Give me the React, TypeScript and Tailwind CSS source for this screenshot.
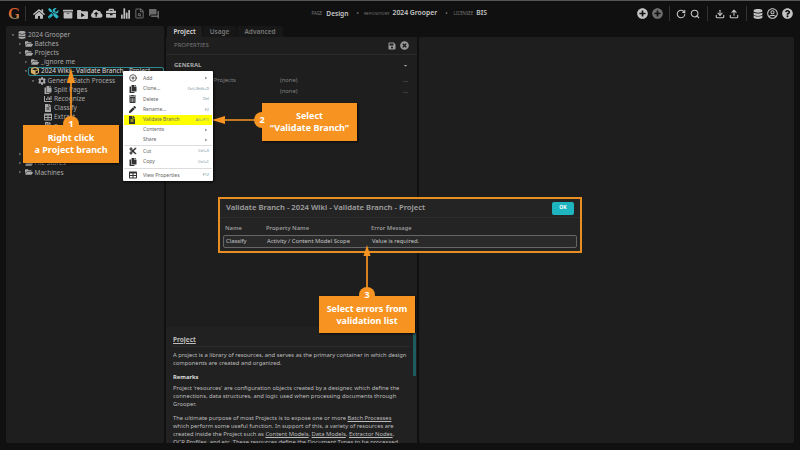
import type { ReactNode } from "react";
import {
  FaHome, FaTools, FaArchive, FaCloudUploadAlt, FaBriefcase, FaFolderOpen,
  FaDatabase, FaCube, FaCog, FaFileAlt, FaSave, FaTimesCircle, FaPlusCircle, FaRegUserCircle, FaQuestionCircle,
  FaTrashAlt, FaPen, FaCut, FaCopy, FaFileInvoice, FaTable, FaChartBar,
} from "react-icons/fa";
import { IoStatsChart } from "react-icons/io5";
import { MdQuestionAnswer } from "react-icons/md";
import { TbCaretRightFilled, TbCaretDownFilled } from "react-icons/tb";
import { CirclePlus, Download, FileSearch, RotateCw, Search, Upload } from "lucide-react";

type TreeRow = { label: string; depth: number; open?: boolean; leaf?: boolean; icon: ReactNode; selected?: boolean };

const ic = "w-[8px] h-[8px] text-[#a8a8a8]";
const tree: TreeRow[] = [
  { label: "2024 Grooper", depth: 0, open: true, icon: <FaDatabase className={ic} /> },
  { label: "Batches", depth: 1, icon: <FaFolderOpen className={ic} /> },
  { label: "Projects", depth: 1, open: true, icon: <FaFolderOpen className={ic} /> },
  { label: "_ignore me", depth: 2, icon: <FaFolderOpen className={ic} /> },
  { label: "2024 Wiki - Validate Branch - Project", depth: 2, open: true, selected: true, icon: <FaCube className="w-[8px] h-[8px] text-[#d8b36a]" /> },
  { label: "Generic Batch Process", depth: 3, open: true, icon: <FaCog className={ic} /> },
  { label: "Split Pages", depth: 4, leaf: true, icon: <FaCopy className={ic} /> },
  { label: "Recognize", depth: 4, leaf: true, icon: <FaChartBar className={ic} /> },
  { label: "Classify", depth: 4, leaf: true, icon: <FaFileAlt className={ic} /> },
  { label: "Extract", depth: 4, leaf: true, icon: <FaTable className={ic} /> },
  { label: "Review", depth: 4, leaf: true, icon: <FaFileInvoice className={ic} /> },
  { label: "Export", depth: 4, leaf: true, icon: <FaFileAlt className={ic} /> },
  { label: "Dispose", depth: 4, leaf: true, icon: <FaFileAlt className={ic} /> },
  { label: "Data Sources", depth: 1, icon: <FaFolderOpen className={ic} /> },
  { label: "File Stores", depth: 1, icon: <FaFolderOpen className={ic} /> },
  { label: "Machines", depth: 1, icon: <FaFolderOpen className={ic} /> },
];

const menu: { label: string; keys?: string; arrow?: boolean; icon?: ReactNode; hl?: boolean; sep?: string; h: string }[] = [
  { label: "Add", arrow: true, icon: <CirclePlus className="w-[8px] h-[8px]" strokeWidth={2.4} />, h: "h-[10.5px]" },
  { label: "Clone...", keys: "Ctrl+Shift+D", icon: <FaCopy className="w-[8px] h-[8px]" />, h: "h-[10.5px]" },
  { label: "Delete", keys: "Del", icon: <FaTrashAlt className="w-[7px] h-[8px]" />, h: "h-[10.5px]" },
  { label: "Rename...", keys: "F2", icon: <FaPen className="w-[7px] h-[7px]" />, h: "h-[10.5px]" },
  { label: "Validate Branch", keys: "Alt+F11", hl: true, icon: <FaFileAlt className="w-[6px] h-[8px]" />, h: "h-[10px]" },
  { label: "Contents", arrow: true, h: "h-[10px]" },
  { label: "Share", arrow: true, h: "h-[10px]", sep: "my-0" },
  { label: "Cut", keys: "Ctrl+X", icon: <FaCut className="w-[8px] h-[8px]" />, h: "h-[10.5px]" },
  { label: "Copy", keys: "Ctrl+C", icon: <FaCopy className="w-[8px] h-[8px]" />, h: "h-[10.5px]", sep: "my-[1px]" },
  { label: "View Properties", keys: "F12", icon: <FaTable className="w-[8px] h-[8px]" />, h: "h-[10.5px]" },
];

function Bar() {
  return <div className="w-px h-[15px] bg-[#333]" />;
}

function Slot({ children, className = "" }: { children: ReactNode; className?: string }) {
  return <div className={`w-[14px] flex justify-center ${className}`}>{children}</div>;
}

function Callout({ lines, className }: { lines: string[]; className: string }) {
  return (
    <div className={`absolute bg-[#f79421] shadow-[1px_1px_2px_rgba(0,0,0,0.7)] flex flex-col items-center justify-center text-white font-bold text-[9px] leading-[12px] ${className}`}>
      {lines.map((l) => (
        <div key={l}>{l}</div>
      ))}
    </div>
  );
}

function Badge({ n, className }: { n: number; className: string }) {
  return (
    <div className={`absolute w-[16px] h-[16px] rounded-full bg-[#f79421] text-white font-bold text-[9px] flex items-center justify-center ${className}`}>
      {n}
    </div>
  );
}

export default function App() {
  return (
    <div className="relative w-[800px] h-[450px] overflow-hidden bg-[#101010] text-[#a8a8a8] font-['Noto_Sans',sans-serif] text-[6.5px]">
      <div className="h-px bg-[#555]" />
      {/* top bar */}
      <header className="flex items-center h-[25px] pl-[8px] pr-[6px]">
        <div className="w-[11px] h-[16px] text-center text-[16px] leading-[16px] font-bold bg-gradient-to-b from-[#e0522a] via-[#d8662a] to-[#3aa17e] bg-clip-text text-transparent font-['Liberation_Serif',serif]">G</div>
        <div className="ml-[6px] mr-[6px] w-px h-[15px] bg-[#333]" />
        <div className="flex items-center text-[#bdbdbd]">
          <div className="w-[14.4px] flex justify-center"><FaHome className="w-[12px] h-[12px]" /></div>
          <div className="w-[14.4px] flex justify-center"><FaTools className="w-[10.5px] h-[10.5px] text-[#2fb6c6]" /></div>
          <div className="w-[14.4px] flex justify-center"><FaArchive className="w-[10px] h-[10px]" /></div>
          <div className="w-[14.4px] flex justify-center">
            <svg viewBox="0 0 12 11" className="w-[11px] h-[10px]" fill="currentColor">
              <path d="M0 2a1 1 0 0 1 1-1h3l1 1.5h6a1 1 0 0 1 1 1V10a1 1 0 0 1-1 1H1a1 1 0 0 1-1-1z" />
              <path d="M4.5 4.5v4.5l4-2.25z" fill="#101010" />
            </svg>
          </div>
          <div className="w-[14.4px] flex justify-center"><FaCloudUploadAlt className="w-[11.5px] h-[11.5px]" /></div>
          <div className="w-[14.4px] flex justify-center"><FaBriefcase className="w-[10.5px] h-[10.5px]" /></div>
          <div className="w-[14.4px] flex justify-center"><IoStatsChart className="w-[11px] h-[11px]" /></div>
          <div className="w-[14.4px] flex justify-center"><FileSearch className="w-[11px] h-[11px] text-[#6a6a6a]" strokeWidth={2.2} /></div>
          <div className="w-[14.4px] flex justify-center"><MdQuestionAnswer className="w-[12px] h-[12px] text-[#6a6a6a]" /></div>
        </div>
        <div className="flex items-center ml-[150px] whitespace-nowrap">
          <span className="text-[4.4px] text-[#777]">PAGE</span>
          <span className="ml-[4px] text-[6.6px] font-semibold text-[#c8c8c8]">Design</span>
          <span className="ml-[8px] text-[#777]">•</span>
          <span className="ml-[5px] text-[4.3px] text-[#777]">REPOSITORY</span>
          <span className="ml-[3px] text-[6.8px] font-semibold text-[#c8c8c8]">2024 Grooper</span>
          <span className="ml-[8px] text-[#777]">•</span>
          <span className="ml-[6px] text-[4.4px] text-[#777]">LICENSEE</span>
          <span className="ml-[3px] text-[6.8px] font-semibold text-[#c8c8c8]">BIS</span>
        </div>
        <div className="flex-1" />
        <div className="flex items-center text-[#c4c4c4]">
          <Slot><FaPlusCircle className="w-[11px] h-[11px]" /></Slot>
          <Slot className="ml-[1px]"><FaPlusCircle className="w-[11px] h-[11px] text-[#6e6e6e]" /></Slot>
          <div className="ml-[5px]"><Bar /></div>
          <Slot className="ml-[4px]"><RotateCw className="w-[10px] h-[10px]" strokeWidth={2.6} /></Slot>
          <Slot><Search className="w-[10px] h-[10px]" strokeWidth={2.6} /></Slot>
          <div className="ml-[5px]"><Bar /></div>
          <Slot className="ml-[5px]"><Download className="w-[10px] h-[10px]" strokeWidth={2.6} /></Slot>
          <Slot><Upload className="w-[10px] h-[10px]" strokeWidth={2.6} /></Slot>
          <div className="ml-[5px]"><Bar /></div>
          <Slot className="ml-[4px]"><FaDatabase className="w-[10px] h-[10px]" /></Slot>
          <Slot><FaRegUserCircle className="w-[11px] h-[11px]" /></Slot>
          <Slot className="ml-[1px]"><FaQuestionCircle className="w-[11px] h-[11px]" /></Slot>
        </div>
      </header>

      <div className="flex gap-[2px] px-[6px] h-[417px]">
        {/* tree */}
        <aside className="w-[158px] bg-[#1e1e1e] rounded-[2px] pt-[4px] pl-[4px] text-[6.5px]">
          {tree.map((r) => (
            <div key={r.label} className="flex items-center h-[9.2px] whitespace-nowrap" style={{ paddingLeft: r.depth * 6.5 }}>
              <span className="w-[6px] flex justify-center">
                {!r.leaf && (r.open ? <TbCaretDownFilled className="w-[4px] h-[4px]" /> : <TbCaretRightFilled className="w-[4px] h-[4px]" />)}
              </span>
              <div className={`flex items-center gap-[2px] pl-[2px] ${r.selected ? "border border-[#2b8a8f] rounded-[2px] h-[9.5px] w-[136px] text-[#d8d8d8] ml-[-1px]" : ""}`}>
                {r.icon}
                <span>{r.label}</span>
              </div>
            </div>
          ))}
        </aside>

        {/* middle */}
        <section className="w-[251px] flex flex-col">
          <nav className="flex h-[11px] text-[6.5px] font-semibold pl-[1px]">
            <div className="w-[35px] bg-[#1e1e1e] rounded-t-[2px] text-center leading-[11px] text-[#ddd]">Project</div>
            <div className="w-[33px] ml-[1px] bg-[#171717] rounded-t-[2px] text-center leading-[11px] text-[#777]">Usage</div>
            <div className="w-[46px] ml-[1px] bg-[#171717] rounded-t-[2px] text-center leading-[11px] text-[#777]">Advanced</div>
          </nav>
          <div className="flex-1 flex flex-col bg-[#1e1e1e] min-h-0">
            <div className="flex items-center justify-between h-[18px] pl-[8px] pr-[8px] border-b border-[#2a2a2a] text-[6px] text-[#777]">
              <span>PROPERTIES</span>
              <span className="flex gap-[4px] items-center">
                <FaSave className="w-[8px] h-[8px] text-[#999]" />
                <FaTimesCircle className="w-[9px] h-[9px] text-[#999]" />
              </span>
            </div>
            <div className="px-[8px] flex-1 text-[6px]">
              <div className="flex justify-between items-center h-[20px] font-bold text-[#aaa]">
                <span>GENERAL</span>
                <TbCaretDownFilled className="w-[5px] h-[5px] mr-[1px]" />
              </div>
              <div className="flex h-[11px] items-center text-[#808080]">
                <span className="w-[106px] text-right pr-[44px]">Projects</span>
                <span className="text-[5.8px]">(none)</span>
                <span className="ml-auto mr-[1px]">...</span>
              </div>
              <div className="flex h-[11px] items-center text-[#808080]">
                <span className="w-[106px]" />
                <span className="text-[5.8px]">(none)</span>
                <span className="ml-auto mr-[1px]">...</span>
              </div>
            </div>
            {/* help */}
            <div className="relative h-[116px] overflow-hidden bg-[#212121] pl-[7px] pr-[7px] pt-[9px] text-[5.8px] leading-[8px] text-[#bcbcbc]">
              <div className="absolute right-[1px] top-[6px] w-[3px] h-[43px] bg-[#1d5c60]" />
              <div className="font-bold underline border-b border-[#2c2c2c] pb-[3px] h-[11px] text-[6.5px]">Project</div>
              <p className="mt-[4px]">A project is a library of resources, and serves as the primary container in which design components are created and organized.</p>
              <p className="mt-[6px] font-bold text-[#ddd]">Remarks</p>
              <p className="mt-[3px] pr-[4px]">Project 'resources' are configuration objects created by a designer, which define the connections, data structures, and logic used when processing documents through Grooper.</p>
              <p className="mt-[6px] pr-[4px]">
                The ultimate purpose of most Projects is to expose one or more <u>Batch Processes</u> which perform some useful function. In support of this, a variety of resources are created inside the Project such as <u>Content Models</u>, <u>Data Models</u>, <u>Extractor Nodes</u>, <u>OCR Profiles</u>, and etc. These resources define the Document Types to be processed.
              </p>
            </div>
          </div>
        </section>

        {/* right */}
        <section className="w-[375px] mt-[11px] bg-[#1e1e1e] rounded-[2px]" />
      </div>

      {/* context menu */}
      <div className="absolute left-[123px] top-[71px] w-[90px] h-[110px] bg-white rounded-[1px] shadow-[1px_1px_3px_rgba(0,0,0,0.8)] pt-[2px] px-[1px] text-[5px] text-[#666]">
        {menu.map((m) => (
          <div key={m.label}>
            <div className={`flex items-center ${m.h} ${m.hl ? "bg-[#ffff00]" : ""}`}>
              <span className="w-[19px] pl-[5px] text-[#333] flex">{m.icon}</span>
              <span className="flex-1">{m.label}</span>
              {m.keys && <span className="text-[3.8px] pr-[3px] text-[#6b8a99]">{m.keys}</span>}
              {m.arrow && <TbCaretRightFilled className="w-[4px] h-[4px] mr-[4px] text-[#333]" />}
            </div>
            {m.sep && <div className={`h-px bg-[#ddd] ${m.sep}`} />}
          </div>
        ))}
      </div>

      {/* validation dialog */}
      <div className="absolute left-[218px] top-[197px] w-[364px] h-[56px] bg-[#242424] border-2 border-[#e98e22]">
        <div className="flex items-center justify-between h-[19px] pl-[6px] pr-[6px] border-b border-[#2e2e2e]">
          <span className="text-[7.7px] font-semibold text-[#a0a0a0]">Validate Branch - 2024 Wiki - Validate Branch - Project</span>
          <span className="w-[22px] h-[13px] rounded-[2px] bg-[#1fb5c0] text-white text-[5px] font-bold flex items-center justify-center">OK</span>
        </div>
        <div className="flex items-center h-[17px] pt-[4px] pl-[5px] text-[5.8px] font-semibold text-[#999]">
          <span className="w-[41px]">Name</span>
          <span className="w-[105px]">Property Name</span>
          <span>Error Message</span>
        </div>
        <div className="flex items-center h-[13px] mx-[3px] pl-[2px] border border-[#666] rounded-[2px] bg-[#2a2a2a] text-[5.8px] text-[#c4c4c4]">
          <span className="w-[41px]">Classify</span>
          <span className="w-[105px]">Activity / Content Model Scope</span>
          <span>Value is required.</span>
        </div>
      </div>

      {/* annotation arrows */}
      <svg className="absolute left-0 top-0 w-[800px] h-[450px] pointer-events-none" viewBox="0 0 800 450">
        <path d="M71 120V80" stroke="#f79421" strokeWidth="1.7" fill="none" />
        <path d="M71 68l4 15h-8z" fill="#f79421" />
        <path d="M256 120H222" stroke="#f79421" strokeWidth="1.7" fill="none" />
        <path d="M212 120l13-4v8z" fill="#f79421" />
        <path d="M367 295V252" stroke="#f79421" strokeWidth="1.7" fill="none" />
        <path d="M367 245l3.5 11h-7z" fill="#f79421" />
      </svg>

      <Callout lines={["Right click", "a Project branch"]} className="left-[23px] top-[125px] w-[96px] h-[38px]" />
      <Callout lines={["Select", "“Validate Branch”"]} className="left-[262px] top-[103px] w-[95px] h-[38px]" />
      <Callout lines={["Select errors from", "validation list"]} className="left-[319px] top-[296px] w-[96px] h-[37px]" />
      <Badge n={1} className="left-[63px] top-[116px]" />
      <Badge n={2} className="left-[254px] top-[112px]" />
      <Badge n={3} className="left-[359px] top-[287px]" />
    </div>
  );
}
